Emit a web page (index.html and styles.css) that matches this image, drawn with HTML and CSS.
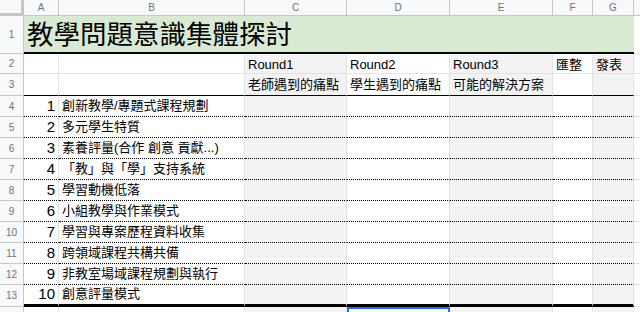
FILE: index.html
```html
<!DOCTYPE html>
<html lang="zh-Hant">
<head>
    <meta charset="UTF-8">
    <meta name="viewport" content="width=device-width, initial-scale=1.0">
    <title>教學問題意識集體探討</title>
    <link rel="stylesheet" href="styles.css">
</head>
<body>
    <div class="sheet">
        <div class="row col-heads">
            <div class="corner"></div>
            <div class="colhead">A</div>
            <div class="colhead">B</div>
            <div class="colhead">C</div>
            <div class="colhead">D</div>
            <div class="colhead">E</div>
            <div class="colhead">F</div>
            <div class="colhead">G</div>
            <div class="colhead rest"></div>
        </div>

        <div class="row title-row">
            <div class="rowhead">1</div>
            <div class="title">教學問題意識集體探討</div>
            <div class="cell rest"></div>
        </div>

        <div class="row sub first-sub">
            <div class="rowhead">2</div>
            <div class="cell"></div>
            <div class="cell"></div>
            <div class="cell shade">Round1</div>
            <div class="cell">Round2</div>
            <div class="cell shade">Round3</div>
            <div class="cell">匯整</div>
            <div class="cell shade">發表</div>
            <div class="cell rest"></div>
        </div>

        <div class="row sub last-sub">
            <div class="rowhead">3</div>
            <div class="cell"></div>
            <div class="cell"></div>
            <div class="cell shade">老師遇到的痛點</div>
            <div class="cell">學生遇到的痛點</div>
            <div class="cell shade">可能的解決方案</div>
            <div class="cell"></div>
            <div class="cell shade"></div>
            <div class="cell rest"></div>
        </div>

        <div id="topics"></div>

        <div class="row tail">
            <div class="rowhead">14</div>
            <div class="cell"></div>
            <div class="cell"></div>
            <div class="cell shade"></div>
            <div class="cell selected"></div>
            <div class="cell shade"></div>
            <div class="cell"></div>
            <div class="cell shade"></div>
            <div class="cell rest"></div>
        </div>
    </div>

    <script>
        const topics = [
            '創新教學/專題式課程規劃',
            '多元學生特質',
            '素養評量(合作 創意 貢獻...)',
            '「教」與「學」支持系統',
            '學習動機低落',
            '小組教學與作業模式',
            '學習與專案歷程資料收集',
            '跨領域課程共構共備',
            '非教室場域課程規劃與執行',
            '創意評量模式'
        ];

        const holder = document.getElementById('topics');
        topics.forEach(function(text, i) {
            const row = document.createElement('div');
            row.className = 'row data' + (i === topics.length - 1 ? ' last-data' : '');
            row.innerHTML =
                '<div class="rowhead">' + (i + 4) + '</div>' +
                '<div class="cell num">' + (i + 1) + '</div>' +
                '<div class="cell">' + text + '</div>' +
                '<div class="cell shade"></div>' +
                '<div class="cell"></div>' +
                '<div class="cell shade"></div>' +
                '<div class="cell"></div>' +
                '<div class="cell shade"></div>' +
                '<div class="cell rest"></div>';
            holder.appendChild(row);
        });
        holder.replaceWith(...holder.childNodes);
    </script>
</body>
</html>
```

FILE: styles.css
```css
:root {
    --grid: #e2e3e3;
    --head-bg: #f8f9fa;
    --head-line: #c7c7c7;
    --head-text: #6f7378;
    --shade: #f3f3f3;
    --green: #d9ead3;
    --select: #1a73e8;
}

body {
    margin: 0;
    background: white;
    font-family: 'Liberation Sans', 'Noto Sans CJK TC', sans-serif;
    color: black;
    overflow: hidden;
}

.sheet {
    display: grid;
    grid-template-columns: 24px 35px 186px 102px 103px 103px 40px 41px 1fr;
    grid-template-rows: 16px 38px 20px 22px repeat(9, 21px) 22px 21px;
}

.row {
    display: contents;
}

.corner {
    background: var(--head-bg);
    border-right: 3px solid #c4c7c5;
    border-bottom: 3px solid #c4c7c5;
}

.colhead,
.rowhead {
    background: var(--head-bg);
    border-right: 1px solid var(--head-line);
    border-bottom: 1px solid var(--head-line);
    color: var(--head-text);
    font-size: 10px;
    display: flex;
    align-items: center;
    justify-content: center;
}

.title {
    grid-column: 2 / 9;
    background: var(--green);
    border-bottom: 2px solid black;
    font-size: 26.5px;
    line-height: 30px;
    padding: 0 3px 2px;
    display: flex;
    align-items: flex-end;
    white-space: nowrap;
}

.cell {
    border-right: 1px solid var(--grid);
    border-bottom: 1px solid var(--grid);
    font-size: 13px;
    line-height: 16px;
    padding: 0 3px 2px;
    display: flex;
    align-items: flex-end;
    white-space: nowrap;
    min-width: 0;
}

.first-sub .cell {
    padding-bottom: 0;
}

.shade {
    background: var(--shade);
}

.rest {
    border-right: none;
}

.last-sub .cell {
    border-bottom: 1px solid black;
}

.data .cell {
    border-bottom: 1px dotted black;
}

.data .num {
    justify-content: flex-end;
    font-size: 15px;
}

.last-data .cell {
    border-bottom: 3px solid black;
}

.row .cell.rest {
    border-bottom: 1px solid var(--grid);
}

.selected {
    border: 2px solid var(--select);
    border-bottom: none;
}
```
